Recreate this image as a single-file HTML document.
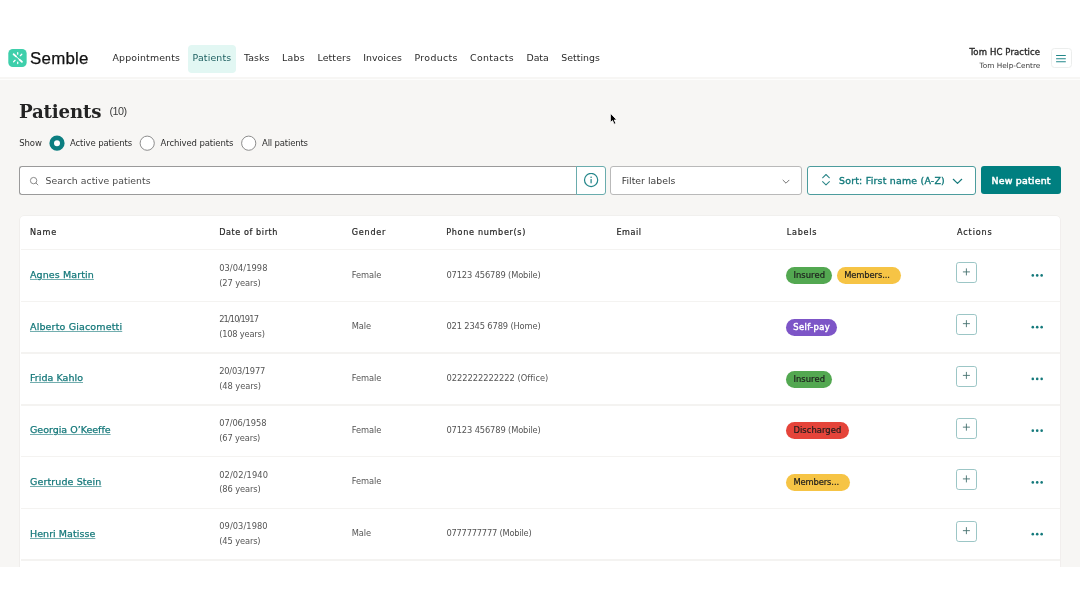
<!DOCTYPE html>
<html lang="en">
<head>
<meta charset="utf-8">
<title>Patients - Semble</title>
<style>
*{box-sizing:border-box;margin:0;padding:0}
html,body{width:1080px;height:608px;overflow:hidden;background:#fff}
body{font-family:"DejaVu Sans","Liberation Sans",sans-serif;color:#2b2b2b;position:relative}
.abs{position:absolute;white-space:nowrap;font-weight:400}
.fb{-webkit-text-stroke:0.35px currentColor}
.fb2{-webkit-text-stroke:0.5px currentColor}
#app{position:absolute;left:0;top:0;width:1080px;height:567px;background:#f7f6f4;overflow:hidden;will-change:transform}
#header{position:absolute;left:0;top:0;width:1080px;height:77px;background:#fff}
#header::after{content:"";position:absolute;left:0;top:79px;width:1080px;height:1px;background:#fdfdfc}
#logo{position:absolute;left:8px;top:48px;width:20px;height:20px}
#logo svg{position:absolute;left:0;top:0}
.nav{color:#2a2a2a}
#navhl{position:absolute;left:188px;top:44.5px;width:48px;height:28px;border-radius:4px;background:#e2f7f3}
.nav.act{color:#1d5f60}
#menu{position:absolute;left:1051px;top:48px;width:21px;height:20px;border:1px solid #eceeed;border-radius:3.5px;background:#fff}
#menu svg{position:absolute;left:0;top:0}
.flt{color:#2f2f2f}
.radio{position:absolute;top:135px;width:17px;height:17px}
.radio svg{position:absolute;left:0;top:0}
#search{position:absolute;left:19.3px;top:166px;width:558px;height:29px;border:1px solid #9a9a9a;border-right:none;border-radius:3px 0 0 3px;background:#fff}
#search svg{position:absolute;left:8.7px;top:8.6px}
#info{position:absolute;left:576.3px;top:166px;width:29.4px;height:29px;border:1px solid #6aacad;border-radius:0 3px 3px 0;background:#fff}
#info svg{position:absolute;left:6px;top:6px}
#filter{position:absolute;left:610.3px;top:166px;width:191.6px;height:29px;border:1px solid #b9b9b9;border-radius:3px;background:#fff}
#filter svg{position:absolute;left:171px;top:11.5px}
#sort{position:absolute;left:807.2px;top:166px;width:168.4px;height:29px;border:1px solid #4c9c9d;border-radius:3px;background:#fff}
#sort svg.ud{position:absolute;left:12.8px;top:5px}
#sort svg.dn{position:absolute;left:143.6px;top:10.9px}
#new{position:absolute;left:981px;top:166px;width:79.6px;height:28.3px;border-radius:3px;background:#007f80}
#card{position:absolute;left:19.6px;top:215.7px;width:1040.8px;height:400px;background:#fff;border-radius:4px;box-shadow:0 0 0 0.6px #eceae7}
.th{color:#262626;-webkit-text-stroke:0.2px #262626}
.hl{position:absolute;left:20.6px;width:1039.8px;height:1.5px;background:#f4f3f1}
.name{color:#15787a;text-decoration:underline;text-underline-offset:1.2px;text-decoration-thickness:0.7px;text-decoration-color:rgba(21,120,122,.6);-webkit-text-stroke:0.25px currentColor}
.cell{color:#555}
.pill{position:absolute;white-space:nowrap;height:17px;border-radius:8.5px;text-align:center;font-size:8.4px;line-height:16.6px;color:#1d1d1d;-webkit-text-stroke:0.2px currentColor}
.pill.trunc{width:63.6px;overflow:hidden;text-align:left;padding-left:7.2px}
.pill.g{background:#53a851}
.pill.y{background:#f6c445}
.pill.p{background:#7d55c7;color:#fff;-webkit-text-stroke:0.45px currentColor}
.pill.r{background:#e5443a}
.plus{position:absolute;left:956px;width:21px;height:21px;border:1px solid #9cc6c6;border-radius:2.8px;background:#fff}
.plus svg{position:absolute;left:0;top:0}
.dots{position:absolute;left:1030px;width:16px;height:12px}
.dots svg{position:absolute;left:0;top:0}
#cursor{position:absolute;left:608px;top:112px}
</style>
</head>
<body>
<div id="app">
  <div id="header">
    <div id="logo"><svg width="20" height="20" viewBox="0 0 20 20"><rect x="0.3" y="0.9" width="18.35" height="18.05" rx="4.5" fill="#3ecfab"/><g transform="translate(0.4,0.7)" stroke="#fff" stroke-linecap="round" fill="none"><path d="M5.1 5.5L13.6 13.1" stroke-width="1.0"/><path d="M5.2 5.6L7.6 7.7M13.5 13L11.1 10.9" stroke-width="1.8"/><path d="M9.3 3.9v1.6M13.4 5.5l-1.5 1.5M9.3 14.9v-1.6M5.2 13.1l1.5-1.5" stroke-width="1.25"/></g></svg></div>
    <div class="abs" style="left:30.00px;top:49.06px;font-size:16.9px;line-height:20px;font-family:'Liberation Sans',sans-serif;letter-spacing:0.24px;color:#111;-webkit-text-stroke:0.25px #111;">Semble</div>
    <div id="navhl"></div>
    <div class="abs nav" style="left:112.50px;top:52.05px;font-size:9.4px;line-height:12px;letter-spacing:0.16px;">Appointments</div>
    <div class="abs nav act" style="left:192.50px;top:52.05px;font-size:9.4px;line-height:12px;letter-spacing:0.16px;">Patients</div>
    <div class="abs nav" style="left:244.00px;top:52.05px;font-size:9.4px;line-height:12px;letter-spacing:0.07px;">Tasks</div>
    <div class="abs nav" style="left:282.00px;top:52.05px;font-size:9.4px;line-height:12px;letter-spacing:0.28px;">Labs</div>
    <div class="abs nav" style="left:317.50px;top:52.05px;font-size:9.4px;line-height:12px;letter-spacing:0.12px;">Letters</div>
    <div class="abs nav" style="left:363.25px;top:52.05px;font-size:9.4px;line-height:12px;letter-spacing:0.03px;">Invoices</div>
    <div class="abs nav" style="left:414.50px;top:52.05px;font-size:9.4px;line-height:12px;letter-spacing:0.35px;">Products</div>
    <div class="abs nav" style="left:470.00px;top:52.05px;font-size:9.4px;line-height:12px;letter-spacing:0.33px;">Contacts</div>
    <div class="abs nav" style="left:526.50px;top:52.05px;font-size:9.4px;line-height:12px;letter-spacing:-0.08px;">Data</div>
    <div class="abs nav" style="left:561.25px;top:52.05px;font-size:9.4px;line-height:12px;letter-spacing:0.03px;">Settings</div>
    <div class="abs fb" style="left:969.50px;top:47.06px;font-size:8.5px;line-height:10px;letter-spacing:0.12px;color:#2b2b2b;">Tom HC Practice</div>
    <div class="abs" style="left:979.60px;top:61.05px;font-size:7.3px;line-height:9px;letter-spacing:-0.01px;color:#3a3a3a;">Tom Help-Centre</div>
    <div id="menu"><svg width="19" height="18" viewBox="0 0 19 18"><path d="M4.1 6.45h9.7M4.1 9.65h9.7M4.1 12.8h9.7" stroke="#23888a" stroke-width="1.05" fill="none"/></svg></div>
  </div>

  <h1 class="abs" style="left:19.00px;top:101.06px;font-size:18.2px;line-height:22px;font-family:'DejaVu Serif','Liberation Serif',serif;font-weight:700;letter-spacing:-0.19px;color:#232323;">Patients</h1>
  <div class="abs" style="left:109.40px;top:105.06px;font-size:10.8px;line-height:12px;font-family:'Liberation Sans',sans-serif;letter-spacing:-0.53px;color:#3c3c3c;">(10)</div>

  <div class="abs flt" style="left:19.30px;top:138.05px;font-size:8.5px;line-height:11px;letter-spacing:-0.11px;">Show</div>
  <div class="radio on" style="left:49px"><svg width="17" height="17" viewBox="0 0 17 17"><circle cx="8.00" cy="8.20" r="5.3" fill="#fff" stroke="#0b7e80" stroke-width="4.6"/></svg></div>
  <div class="abs flt" style="left:70.00px;top:138.05px;font-size:8.5px;line-height:11px;letter-spacing:-0.11px;">Active patients</div>
  <div class="radio" style="left:139px"><svg width="17" height="17" viewBox="0 0 17 17"><circle cx="8.20" cy="8.20" r="7.1" fill="#fff" stroke="#8d8d8d" stroke-width="1"/></svg></div>
  <div class="abs flt" style="left:160.50px;top:138.05px;font-size:8.5px;line-height:11px;letter-spacing:-0.11px;">Archived patients</div>
  <div class="radio" style="left:240px"><svg width="17" height="17" viewBox="0 0 17 17"><circle cx="8.70" cy="8.20" r="7.1" fill="#fff" stroke="#8d8d8d" stroke-width="1"/></svg></div>
  <div class="abs flt" style="left:262.00px;top:138.05px;font-size:8.5px;line-height:11px;letter-spacing:-0.17px;">All patients</div>

  <div id="search">
    <svg width="11" height="11" viewBox="0 0 11 11"><circle cx="4.6" cy="4.6" r="3.2" stroke="#7a7a7a" stroke-width="0.85" fill="none"/><path d="M7 7L8.9 8.9" stroke="#7a7a7a" stroke-width="0.85" stroke-linecap="round"/></svg>
    <span class="abs" style="left:25.30px;top:8.06px;font-size:9.3px;line-height:12px;letter-spacing:0.04px;color:#4a4a4a;">Search active patients</span>
  </div>
  <div id="info"><svg width="16" height="16" viewBox="0 0 16 16"><circle cx="8.1" cy="7" r="6.6" stroke="#23868a" stroke-width="1.2" fill="none"/><path d="M8.1 6.6v3.2" stroke="#23868a" stroke-width="1.25" stroke-linecap="round"/><circle cx="8.1" cy="4.3" r="0.8" fill="#23868a"/></svg></div>
  <div id="filter"><span class="abs" style="left:10.45px;top:8.06px;font-size:9.3px;line-height:12px;letter-spacing:0.03px;color:#3b3b3b;">Filter labels</span><svg width="8" height="6" viewBox="0 0 8 6"><path d="M1 1.2L4 4.2L7 1.2" stroke="#666" stroke-width="0.9" fill="none" stroke-linecap="round" stroke-linejoin="round"/></svg></div>
  <div id="sort"><svg class="ud" width="10" height="14" viewBox="0 0 10 14"><path transform="translate(0,0.6)" d="M1.6 5.2L5 1.9L8.4 5.2M1.6 9L5 12.3L8.4 9" stroke="#2d8789" stroke-width="1.05" fill="none" stroke-linecap="round" stroke-linejoin="round"/></svg><span class="abs fb" style="left:30.80px;top:8.05px;font-size:9.4px;line-height:12px;letter-spacing:0.23px;color:#12797b;">Sort: First name (A-Z)</span><svg class="dn" width="11" height="7" viewBox="0 0 11 7"><path d="M1.3 1.3L5.5 5.4L9.7 1.3" stroke="#15797b" stroke-width="1.2" fill="none" stroke-linecap="round" stroke-linejoin="round"/></svg></div>
  <div id="new"><span class="abs fb2" style="left:10.50px;top:9.05px;font-size:9.4px;line-height:12px;letter-spacing:0.22px;color:#fff;">New patient</span></div>

  <div id="card"></div>
  <div class="abs th" style="left:30.00px;top:227.05px;font-size:8.1px;line-height:11px;letter-spacing:0.75px;">Name</div>
  <div class="abs th" style="left:219.25px;top:227.05px;font-size:8.1px;line-height:11px;letter-spacing:0.57px;">Date of birth</div>
  <div class="abs th" style="left:351.75px;top:227.05px;font-size:8.1px;line-height:11px;letter-spacing:0.76px;">Gender</div>
  <div class="abs th" style="left:446.25px;top:227.05px;font-size:8.1px;line-height:11px;letter-spacing:0.67px;">Phone number(s)</div>
  <div class="abs th" style="left:616.50px;top:227.05px;font-size:8.1px;line-height:11px;letter-spacing:0.48px;">Email</div>
  <div class="abs th" style="left:786.75px;top:227.05px;font-size:8.1px;line-height:11px;letter-spacing:0.72px;">Labels</div>
  <div class="abs th" style="left:957.00px;top:227.05px;font-size:8.1px;line-height:11px;letter-spacing:0.87px;">Actions</div>
  <div class="hl" style="top:248.9px"></div>
  <div class="r">
    <a class="abs name" style="left:30.00px;top:269.05px;font-size:9.5px;line-height:12px;letter-spacing:0.10px;" href="#">Agnes Martin</a>
    <div class="abs cell" style="left:219.20px;top:263.06px;font-size:8.3px;line-height:11px;letter-spacing:0.05px;">03/04/1998</div>
    <div class="abs cell" style="left:219.20px;top:278.06px;font-size:8.3px;line-height:11px;letter-spacing:-0.11px;">(27 years)</div>
    <div class="abs cell" style="left:351.80px;top:270.06px;font-size:8.3px;line-height:11px;letter-spacing:-0.08px;">Female</div>
    <div class="abs cell" style="left:446.40px;top:270.06px;font-size:8.3px;line-height:11px;letter-spacing:-0.13px;">07123 456789 (Mobile)</div>
    <span class="pill g" style="left:786.2px;top:267.10px;width:46.1px;letter-spacing:0.07px">Insured</span><span class="pill y trunc" style="left:837.0px;top:267.10px;letter-spacing:-0.12px">Members...</span>
    <div class="plus" style="top:262px"><svg width="19" height="19" viewBox="0 0 19 19"><path d="M9.4 5.40v7M5.9 8.90h7" stroke="#45706f" stroke-width="0.9" fill="none"/></svg></div>
    <div class="dots" style="top:269px"><svg width="16" height="12" viewBox="0 0 16 12"><g fill="#14797b"><circle cx="2.8" cy="6.40" r="1.3"/><circle cx="7.2" cy="6.40" r="1.3"/><circle cx="11.65" cy="6.40" r="1.3"/></g></svg></div>
    <div class="hl" style="top:300.65px"></div>
  </div>
  <div class="r">
    <a class="abs name" style="left:30.00px;top:321.05px;font-size:9.5px;line-height:12px;letter-spacing:0.15px;" href="#">Alberto Giacometti</a>
    <div class="abs cell" style="left:219.20px;top:314.06px;font-size:8.3px;line-height:11px;letter-spacing:-0.90px;">21/10/1917</div>
    <div class="abs cell" style="left:219.20px;top:329.06px;font-size:8.3px;line-height:11px;letter-spacing:-0.21px;">(108 years)</div>
    <div class="abs cell" style="left:351.80px;top:321.06px;font-size:8.3px;line-height:11px;letter-spacing:-0.09px;">Male</div>
    <div class="abs cell" style="left:446.40px;top:321.06px;font-size:8.3px;line-height:11px;letter-spacing:-0.14px;">021 2345 6789 (Home)</div>
    <span class="pill p" style="left:786.2px;top:318.85px;width:50.9px;letter-spacing:0.38px">Self-pay</span>
    <div class="plus" style="top:314px"><svg width="19" height="19" viewBox="0 0 19 19"><path d="M9.4 5.15v7M5.9 8.65h7" stroke="#45706f" stroke-width="0.9" fill="none"/></svg></div>
    <div class="dots" style="top:321px"><svg width="16" height="12" viewBox="0 0 16 12"><g fill="#14797b"><circle cx="2.8" cy="6.15" r="1.3"/><circle cx="7.2" cy="6.15" r="1.3"/><circle cx="11.65" cy="6.15" r="1.3"/></g></svg></div>
    <div class="hl" style="top:352.40px"></div>
  </div>
  <div class="r">
    <a class="abs name" style="left:30.00px;top:372.05px;font-size:9.5px;line-height:12px;letter-spacing:0.04px;" href="#">Frida Kahlo</a>
    <div class="abs cell" style="left:219.20px;top:366.06px;font-size:8.3px;line-height:11px;letter-spacing:-0.19px;">20/03/1977</div>
    <div class="abs cell" style="left:219.20px;top:381.06px;font-size:8.3px;line-height:11px;letter-spacing:-0.07px;">(48 years)</div>
    <div class="abs cell" style="left:351.80px;top:373.06px;font-size:8.3px;line-height:11px;letter-spacing:-0.08px;">Female</div>
    <div class="abs cell" style="left:446.40px;top:373.06px;font-size:8.3px;line-height:11px;letter-spacing:-0.01px;">0222222222222 (Office)</div>
    <span class="pill g" style="left:786.2px;top:370.60px;width:46.1px;letter-spacing:0.07px">Insured</span>
    <div class="plus" style="top:366px"><svg width="19" height="19" viewBox="0 0 19 19"><path d="M9.4 4.90v7M5.9 8.40h7" stroke="#45706f" stroke-width="0.9" fill="none"/></svg></div>
    <div class="dots" style="top:373px"><svg width="16" height="12" viewBox="0 0 16 12"><g fill="#14797b"><circle cx="2.8" cy="5.90" r="1.3"/><circle cx="7.2" cy="5.90" r="1.3"/><circle cx="11.65" cy="5.90" r="1.3"/></g></svg></div>
    <div class="hl" style="top:404.15px"></div>
  </div>
  <div class="r">
    <a class="abs name" style="left:30.00px;top:424.05px;font-size:9.5px;line-height:12px;letter-spacing:-0.01px;" href="#">Georgia O’Keeffe</a>
    <div class="abs cell" style="left:219.20px;top:418.06px;font-size:8.3px;line-height:11px;letter-spacing:-0.05px;">07/06/1958</div>
    <div class="abs cell" style="left:219.20px;top:433.06px;font-size:8.3px;line-height:11px;letter-spacing:-0.15px;">(67 years)</div>
    <div class="abs cell" style="left:351.80px;top:425.06px;font-size:8.3px;line-height:11px;letter-spacing:-0.08px;">Female</div>
    <div class="abs cell" style="left:446.40px;top:425.06px;font-size:8.3px;line-height:11px;letter-spacing:-0.13px;">07123 456789 (Mobile)</div>
    <span class="pill r" style="left:786.2px;top:422.35px;width:62.4px;letter-spacing:0.07px">Discharged</span>
    <div class="plus" style="top:418px"><svg width="19" height="19" viewBox="0 0 19 19"><path d="M9.4 4.65v7M5.9 8.15h7" stroke="#45706f" stroke-width="0.9" fill="none"/></svg></div>
    <div class="dots" style="top:424px"><svg width="16" height="12" viewBox="0 0 16 12"><g fill="#14797b"><circle cx="2.8" cy="6.65" r="1.3"/><circle cx="7.2" cy="6.65" r="1.3"/><circle cx="11.65" cy="6.65" r="1.3"/></g></svg></div>
    <div class="hl" style="top:455.90px"></div>
  </div>
  <div class="r">
    <a class="abs name" style="left:30.00px;top:476.05px;font-size:9.5px;line-height:12px;letter-spacing:0.11px;" href="#">Gertrude Stein</a>
    <div class="abs cell" style="left:219.20px;top:470.06px;font-size:8.3px;line-height:11px;letter-spacing:0.11px;">02/02/1940</div>
    <div class="abs cell" style="left:219.20px;top:484.06px;font-size:8.3px;line-height:11px;letter-spacing:-0.10px;">(86 years)</div>
    <div class="abs cell" style="left:351.80px;top:476.06px;font-size:8.3px;line-height:11px;letter-spacing:-0.08px;">Female</div>
    <span class="pill y trunc" style="left:786.2px;top:474.10px;letter-spacing:-0.12px">Members...</span>
    <div class="plus" style="top:469px"><svg width="19" height="19" viewBox="0 0 19 19"><path d="M9.4 5.40v7M5.9 8.90h7" stroke="#45706f" stroke-width="0.9" fill="none"/></svg></div>
    <div class="dots" style="top:476px"><svg width="16" height="12" viewBox="0 0 16 12"><g fill="#14797b"><circle cx="2.8" cy="6.40" r="1.3"/><circle cx="7.2" cy="6.40" r="1.3"/><circle cx="11.65" cy="6.40" r="1.3"/></g></svg></div>
    <div class="hl" style="top:507.65px"></div>
  </div>
  <div class="r">
    <a class="abs name" style="left:30.00px;top:528.05px;font-size:9.5px;line-height:12px;letter-spacing:0.05px;" href="#">Henri Matisse</a>
    <div class="abs cell" style="left:219.20px;top:521.06px;font-size:8.3px;line-height:11px;letter-spacing:0.07px;">09/03/1980</div>
    <div class="abs cell" style="left:219.20px;top:536.05px;font-size:8.3px;line-height:11px;letter-spacing:-0.12px;">(45 years)</div>
    <div class="abs cell" style="left:351.80px;top:528.05px;font-size:8.3px;line-height:11px;letter-spacing:-0.09px;">Male</div>
    <div class="abs cell" style="left:446.40px;top:528.05px;font-size:8.3px;line-height:11px;letter-spacing:-0.21px;">0777777777 (Mobile)</div>
    <div class="plus" style="top:521px"><svg width="19" height="19" viewBox="0 0 19 19"><path d="M9.4 5.15v7M5.9 8.65h7" stroke="#45706f" stroke-width="0.9" fill="none"/></svg></div>
    <div class="dots" style="top:528px"><svg width="16" height="12" viewBox="0 0 16 12"><g fill="#14797b"><circle cx="2.8" cy="6.15" r="1.3"/><circle cx="7.2" cy="6.15" r="1.3"/><circle cx="11.65" cy="6.15" r="1.3"/></g></svg></div>
    <div class="hl" style="top:559.40px"></div>
  </div>
  <svg id="cursor" width="10" height="14" viewBox="0 0 10 14"><path transform="translate(0.4,0)" d="M2 1.2L2 10.6L4.1 8.5L5.7 12.2L7.5 11.4L5.8 8L8.4 7.9Z" fill="#000" stroke="#fff" stroke-width="0.8" stroke-linejoin="round"/></svg>
</div>
</body>
</html>
